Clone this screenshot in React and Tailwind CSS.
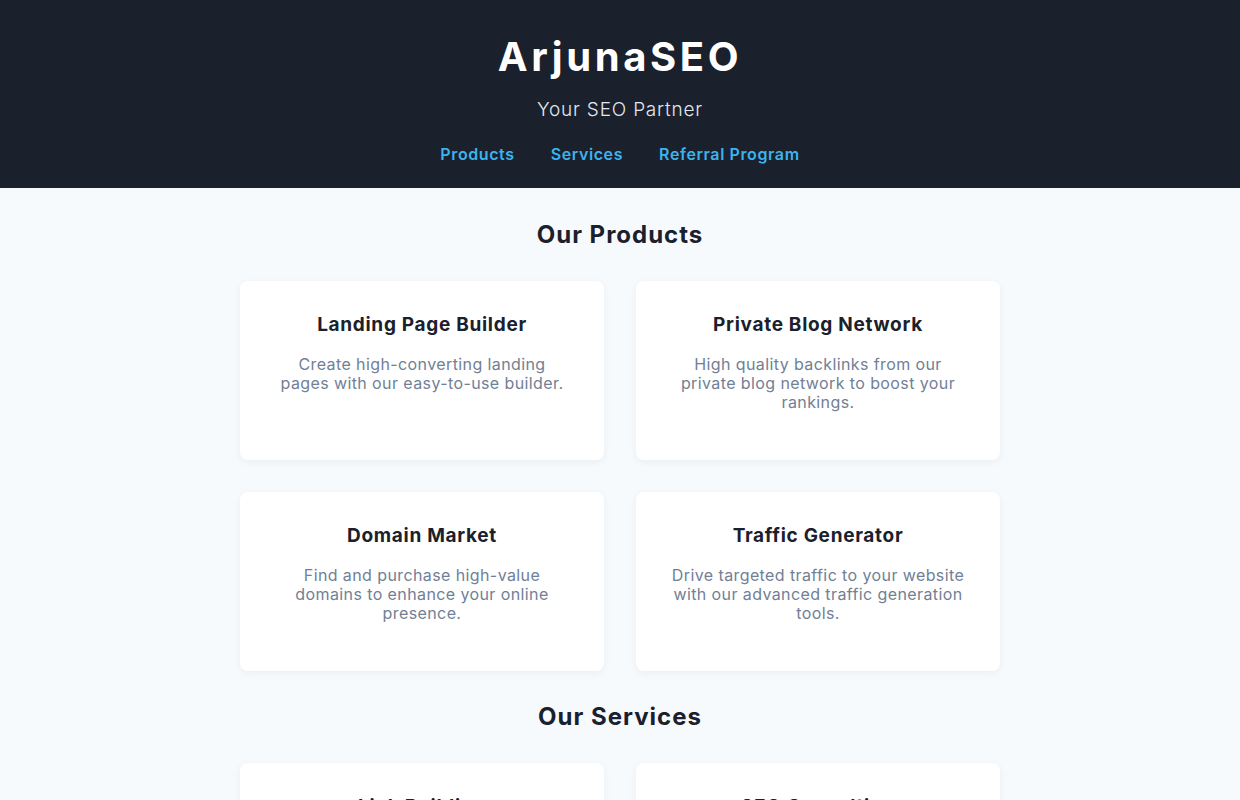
const products = [
	{
		title: "Landing Page Builder",
		text: "Create high-converting landing pages with our easy-to-use builder.",
	},
	{
		title: "Private Blog Network",
		text: "High quality backlinks from our private blog network to boost your rankings.",
	},
	{
		title: "Domain Market",
		text: "Find and purchase high-value domains to enhance your online presence.",
	},
	{
		title: "Traffic Generator",
		text: "Drive targeted traffic to your website with our advanced traffic generation tools.",
	},
]

const services = [
	{
		title: "Link Building",
		text: "Earn authoritative links that grow your domain strength over time.",
	},
	{
		title: "SEO Consulting",
		text: "Expert guidance to plan and run a winning search strategy.",
	},
]

function Card({ title, text }) {
	return (
		<div className="rounded-lg bg-white px-[34px] pb-12 pt-8 text-center shadow-[0_2px_8px_rgba(0,0,0,0.05)]">
			<h3 className="text-[19px] font-bold leading-[23px] tracking-[0.7px] text-[#1a202c]">
				{title}
			</h3>
			<p className="mt-[19px] text-[16px] leading-[19px] tracking-[0.4px] text-[#718096]">
				{text}
			</p>
		</div>
	)
}

function Section({ heading, items }) {
	return (
		<section className="flex flex-col items-center">
			<h2 className="text-[24px] font-bold leading-[29px] tracking-[1px] text-[#1a202c]">
				{heading}
			</h2>
			<div className="mt-8 grid w-[760px] grid-cols-2 gap-8">
				{items.map((item) => (
					<Card key={item.title} {...item} />
				))}
			</div>
		</section>
	)
}

export default function App() {
	return (
		<div
			className="min-h-screen bg-[#f7fafc]"
			style={{ fontFamily: "Inter, 'Noto Sans', sans-serif" }}
		>
			<header className="flex flex-col items-center bg-[#1a202c] pb-6 pt-8">
				<h1 className="text-[40px] font-bold leading-[49px] tracking-[3.6px] text-white">
					ArjunaSEO
				</h1>
				<p className="mt-[18px] text-[19px] font-light leading-[22px] tracking-[0.8px] text-[#e2e8f0]">
					Your SEO Partner
				</p>
				<nav className="mt-[23px] flex gap-9 text-[16px] font-semibold leading-[20px] tracking-[0.6px] text-[#3bb4ee]">
					<a href="#products">Products</a>
					<a href="#services">Services</a>
					<a href="#referral">Referral Program</a>
				</nav>
			</header>
			<main className="flex flex-col gap-[31px] pb-8 pt-8">
				<Section heading="Our Products" items={products} />
				<Section heading="Our Services" items={services} />
			</main>
		</div>
	)
}
